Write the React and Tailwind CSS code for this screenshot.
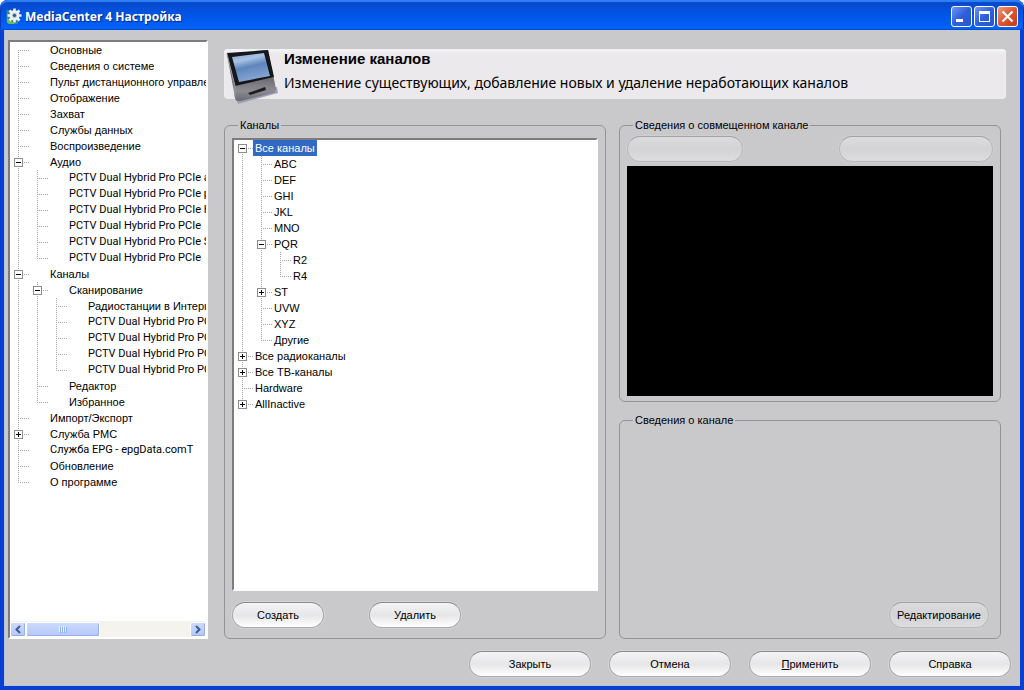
import React, { useState } from "react";

const settingsTree = [
  { label: "Основные" },
  { label: "Сведения о системе" },
  { label: "Пульт дистанционного управления" },
  { label: "Отображение" },
  { label: "Захват" },
  { label: "Службы данных" },
  { label: "Воспроизведение" },
  {
    label: "Аудио",
    open: true,
    children: [
      { label: "PCTV Dual Hybrid Pro PCIe a" },
      { label: "PCTV Dual Hybrid Pro PCIe p" },
      { label: "PCTV Dual Hybrid Pro PCIe H" },
      { label: "PCTV Dual Hybrid Pro PCIe" },
      { label: "PCTV Dual Hybrid Pro PCIe S" },
      { label: "PCTV Dual Hybrid Pro PCIe" },
    ],
  },
  {
    label: "Каналы",
    open: true,
    children: [
      {
        label: "Сканирование",
        open: true,
        children: [
          { label: "Радиостанции в Интернете" },
          { label: "PCTV Dual Hybrid Pro PCIe" },
          { label: "PCTV Dual Hybrid Pro PCIe" },
          { label: "PCTV Dual Hybrid Pro PCIe" },
          { label: "PCTV Dual Hybrid Pro PCIe" },
        ],
      },
      { label: "Редактор" },
      { label: "Избранное" },
    ],
  },
  { label: "Импорт/Экспорт" },
  { label: "Служба PMC", children: [] },
  { label: "Служба EPG - epgData.comT" },
  { label: "Обновление" },
  { label: "О программе" },
];

const channelTree = [
  {
    label: "Все каналы",
    open: true,
    children: [
      { label: "ABC" },
      { label: "DEF" },
      { label: "GHI" },
      { label: "JKL" },
      { label: "MNO" },
      { label: "PQR", open: true, children: [{ label: "R2" }, { label: "R4" }] },
      { label: "ST", children: [] },
      { label: "UVW" },
      { label: "XYZ" },
      { label: "Другие" },
    ],
  },
  { label: "Все радиоканалы", children: [] },
  { label: "Все ТВ-каналы", children: [] },
  { label: "Hardware" },
  { label: "AllInactive", children: [] },
];

// One 19px column of the tree: dotted lines and the plus/minus box
const Guide = ({ up, down, across, box }) => (
  <svg
    width="19"
    height="16"
    className="block shrink-0"
    shapeRendering="crispEdges"
    fill="none"
  >
    <g stroke="#a4a4a4" strokeDasharray="1 1">
      {up && <path d="M8.5 0V8" />}
      {down && <path d="M8.5 8V16" />}
      {across && <path d="M8 8.5H19" />}
    </g>
    {box && (
      <>
        <rect x="4.5" y="4.5" width="8" height="8" fill="#fff" stroke="#8c8c8c" />
        <path d="M6 8.5H11" stroke="#000" />
        {box === "plus" && <path d="M8.5 6V11" stroke="#000" />}
      </>
    )}
  </svg>
);

const TreeNode = ({ node, lines, isFirst, isLast, iconSlot, selected, onSelect }) => {
  const [open, setOpen] = useState(!!node.open);
  // long device names are set in the narrower face
  const narrow = node.label.startsWith("PCTV") || node.label.includes("EPG");
  const guide = (
    <Guide
      up={!isFirst}
      down={!isLast}
      across
      box={node.children && (open ? "minus" : "plus")}
    />
  );

  return (
    <li>
      <div className="flex h-4 items-center whitespace-nowrap">
        {lines.map((line, i) => (
          <Guide key={i} up={line} down={line} />
        ))}
        {node.children ? (
          <button
            type="button"
            className="shrink-0"
            aria-label={node.label}
            aria-expanded={open}
            onClick={() => setOpen(!open)}
          >
            {guide}
          </button>
        ) : (
          guide
        )}
        {iconSlot && <span className="w-[19px] shrink-0" />}
        <button
          type="button"
          onClick={() => onSelect(node)}
          className={`h-4 px-0.5 leading-4 ${
            selected === node ? "bg-[#316ac5] text-white" : ""
          } ${narrow ? "font-['Roboto']" : ""}`}
        >
          {node.label}
        </button>
      </div>
      {open && node.children && (
        <ul>
          {node.children.map((child, i) => (
            <TreeNode
              key={i}
              node={child}
              lines={[...lines, !isLast]}
              isLast={i === node.children.length - 1}
              iconSlot={iconSlot}
              selected={selected}
              onSelect={onSelect}
            />
          ))}
        </ul>
      )}
    </li>
  );
};

const Tree = ({ nodes, iconSlot, initial }) => {
  const [selected, setSelected] = useState(initial);

  return (
    <ul className="min-h-0 flex-1 overflow-hidden">
      {nodes.map((node, i) => (
        <TreeNode
          key={i}
          node={node}
          lines={[]}
          isFirst={i === 0}
          isLast={i === nodes.length - 1}
          iconSlot={iconSlot}
          selected={selected}
          onSelect={setSelected}
        />
      ))}
    </ul>
  );
};

const PillButton = ({ className, children, ...rest }) => (
  <button
    type="button"
    className={`h-[26px] rounded-full border border-[#a9a9ab] border-t-[#8b8b8d] bg-linear-to-b from-[#f4f4f5] via-[#e6e6e8] to-white shadow-[0_0_0_1px_#d3d3d5,inset_0_-1px_1px_#fff] disabled:border-[#b9b9bb] disabled:border-t-[#a2a2a4] disabled:from-[#dcdcdd] disabled:via-[#d3d3d5] disabled:to-[#dddddf] disabled:shadow-[0_0_0_1px_#cfcfd1] ${className}`}
    {...rest}
  >
    {children}
  </button>
);

const Group = ({ title, className, children }) => (
  <fieldset
    className={`flex min-w-0 flex-col rounded-md border border-[#949496] px-[7px] ${className}`}
  >
    <legend className="ml-1.5 h-3.5 px-0.5 leading-3.5">{title}</legend>
    {children}
  </fieldset>
);

const GearIcon = () => (
  <svg width="17" height="17" viewBox="0 0 17 17">
    <path d="M0.500 2H12V16H4Q0.500 16 0.500 12Z" fill="#2f8c8a" />
    <path d="M1 10l8 6H4a3 3 0 0 1-3-3z" fill="#6fb96a" />
    <path
      d="M8.500 0.500V14.500M1.500 7.500H15.500M3.500 2.500L13.500 12.500M13.500 2.500L3.500 12.500"
      stroke="#eef1f4"
      strokeWidth="2.600"
    />
    <circle cx="8.500" cy="7.500" r="5" fill="#eef1f4" />
    <circle cx="8.500" cy="7.500" r="2.400" fill="#9fb4c6" />
    <circle cx="8.500" cy="7.500" r="1.400" fill="#2c5580" />
  </svg>
);

const MonitorIcon = () => (
  <svg width="56" height="56" viewBox="0 0 56 56" className="block">
    <defs>
      <linearGradient id="screen" x1="0" y1="0" x2="0.300" y2="1">
        <stop offset="0" stopColor="#7f9fca" />
        <stop offset="0.300" stopColor="#a9c3e4" />
        <stop offset="0.550" stopColor="#5e86bd" />
        <stop offset="1" stopColor="#86a5d2" />
      </linearGradient>
      <linearGradient id="base" x1="0" y1="0" x2="0" y2="1">
        <stop offset="0.500" stopColor="#66666c" />
        <stop offset="0.800" stopColor="#8b8b90" />
        <stop offset="1" stopColor="#6a6a72" />
      </linearGradient>
    </defs>
    <path d="M10 46L14 55L54 44L53 38Z" fill="#a3a1b8" />
    <path d="M3 5L44 1L52 40Q52 43 49 44L17 52Q12 53 11 49Z" fill="url(#base)" />
    <path d="M3 4L44 1L50 28L11 37Z" fill="#15171b" />
    <path d="M8 8L40 4L46 27L15 33Z" fill="url(#screen)" />
    <path d="M3 5L11 37L11 47" fill="none" stroke="#9a9ca3" />
    <path d="M24 44L41 38L42 41L26 46Z" fill="#1e1e22" />
  </svg>
);

const captionButton =
  "flex h-[21px] w-[21px] items-center justify-center rounded-[3px] border border-white";

const TitleBar = () => (
  <header className="flex h-[30px] shrink-0 items-center rounded-t-lg bg-linear-to-b from-[#0a46c4] via-[#0055e8] to-[#0064fb] pl-1.5 pr-1.5 pt-0.5 shadow-[inset_0_2px_1px_#2f80f4,inset_0_-1px_0_#0050d0,inset_1px_0_0_#0a32b4,inset_-1px_0_0_#0019a0]">
    <GearIcon />
    <h1 className="ml-0.5 mt-0.5 flex-1 font-['Noto_Sans'] text-[12px] font-bold leading-4 text-white [text-shadow:1px_1px_1px_#062a86]">
      MediaCenter 4 Настройка
    </h1>
    <div className="flex gap-0.5">
      <button
        type="button"
        aria-label="Свернуть"
        className={`${captionButton} bg-linear-to-br from-[#6f94f0] via-[#2f5fdc] to-[#2a55c8]`}
      >
        <svg width="19" height="19" shapeRendering="crispEdges">
          <rect x="4" y="12" width="7" height="3" fill="#fff" />
        </svg>
      </button>
      <button
        type="button"
        aria-label="Развернуть"
        className={`${captionButton} bg-linear-to-br from-[#6f94f0] via-[#2f5fdc] to-[#2a55c8]`}
      >
        <svg width="19" height="19" shapeRendering="crispEdges">
          <path d="M4 4h11v11h-11zM5 7v7h9v-7z" fill="#fff" fillRule="evenodd" />
        </svg>
      </button>
      <button
        type="button"
        aria-label="Закрыть окно"
        className={`${captionButton} bg-linear-to-br from-[#ee9a7c] via-[#de5530] to-[#c43c14]`}
      >
        <svg width="19" height="19">
          <path d="M4.500 4.500l10 10M14.500 4.500l-10 10" stroke="#fff" strokeWidth="2.200" />
        </svg>
      </button>
    </div>
  </header>
);

const scrollPart =
  "flex h-[15px] shrink-0 items-center justify-center rounded-[2px] border border-white bg-linear-to-b from-[#cbd9fd] to-[#b6c8f8] shadow-[inset_-1px_-1px_0_#98b0e8]";

const ScrollBar = () => (
  <div className="flex h-4 shrink-0 items-center bg-[#f4f3ee]">
    <button type="button" aria-label="Влево" className={`${scrollPart} w-4`}>
      <svg width="8" height="9" fill="none" stroke="#3f5a94" strokeWidth="2">
        <path d="M6 1L2.500 4.500L6 8" />
      </svg>
    </button>
    <div className={`${scrollPart} w-[74px]`}>
      <svg width="10" height="7" shapeRendering="crispEdges">
        <path d="M1.500 0V6M3.500 0V6M5.500 0V6M7.500 0V6" stroke="#eef4fe" />
        <path d="M2.500 1V7M4.500 1V7M6.500 1V7M8.500 1V7" stroke="#8cb0f8" />
      </svg>
    </div>
    <button type="button" aria-label="Вправо" className={`${scrollPart} ml-auto w-4`}>
      <svg width="8" height="9" fill="none" stroke="#3f5a94" strokeWidth="2">
        <path d="M2 1L5.500 4.500L2 8" />
      </svg>
    </button>
  </div>
);

const sunken =
  "flex flex-col border-2 border-b-white border-l-[#7d7c7a] border-r-white border-t-[#7d7c7a] bg-white";

const App = () => {
  return (
    <div className="flex h-screen flex-col bg-white font-['Liberation_Sans',sans-serif] text-[11px] text-black">
      <TitleBar />
      <div className="flex min-h-0 flex-1 flex-col border-x-4 border-b-4 border-[#0a3fd4] bg-[#c9c8ca] shadow-[inset_1px_0_0_#b9c4dc,inset_0_-1px_0_#b9c4dc]">
        <div className="flex min-h-0 flex-1 gap-4 pl-1">
          <nav className={`${sunken} mt-2.5 w-[200px] shrink-0`}>
            <Tree nodes={settingsTree} iconSlot />
            <ScrollBar />
          </nav>

          <main className="flex min-w-0 flex-1 flex-col">
            <section className="mr-3.5 mt-[19px] flex h-[50px] shrink-0 rounded-sm bg-[#ebe9ec] shadow-[inset_0_3px_2px_#f3f2f4]">
              <div className="h-[50px] w-[60px] shrink-0">
                <MonitorIcon />
              </div>
              <div className="whitespace-nowrap">
                <h2 className="mt-0.5 text-[15px] font-bold leading-4">Изменение каналов</h2>
                <p className="mt-2 font-['Noto_Sans'] text-[14px] leading-4">
                  Изменение существующих, добавление новых и удаление неработающих каналов
                </p>
              </div>
            </section>

            <div className="mr-[19px] mt-[19px] grid min-h-0 flex-1 grid-cols-2 gap-[13px]">
              <Group title="Каналы" className="pb-2.5">
                <div className={`${sunken} mt-1.5 min-h-0 flex-1`}>
                  <Tree nodes={channelTree} initial={channelTree[0]} />
                </div>
                <div className="mt-[11px] flex gap-[45px]">
                  <PillButton className="w-[92px]">Создать</PillButton>
                  <PillButton className="w-[92px]">Удалить</PillButton>
                </div>
              </Group>

              <div className="flex min-w-0 flex-col gap-[11px]">
                <Group title="Сведения о совмещенном канале" className="pb-[5px]">
                  <div className="mt-1 flex justify-between">
                    <PillButton disabled aria-label="Канал" className="w-[116px]" />
                    <PillButton disabled aria-label="Источник" className="w-[154px]" />
                  </div>
                  <div className="mt-1 h-[230px] bg-black" />
                </Group>
                <Group title="Сведения о канале" className="flex-1 pb-2.5">
                  <div className="flex h-full items-end justify-end pr-1">
                    <PillButton disabled className="w-[100px]">
                      Редактирование
                    </PillButton>
                  </div>
                </Group>
              </div>
            </div>
          </main>
        </div>

        <footer className="flex shrink-0 justify-end gap-[18px] pb-[9px] pr-[9px] pt-3">
          <PillButton className="w-[122px]">Закрыть</PillButton>
          <PillButton className="w-[122px]">Отмена</PillButton>
          <PillButton className="w-[122px]">
            <u>П</u>рименить
          </PillButton>
          <PillButton className="w-[122px]">Справка</PillButton>
        </footer>
      </div>
    </div>
  );
};

export default App;
